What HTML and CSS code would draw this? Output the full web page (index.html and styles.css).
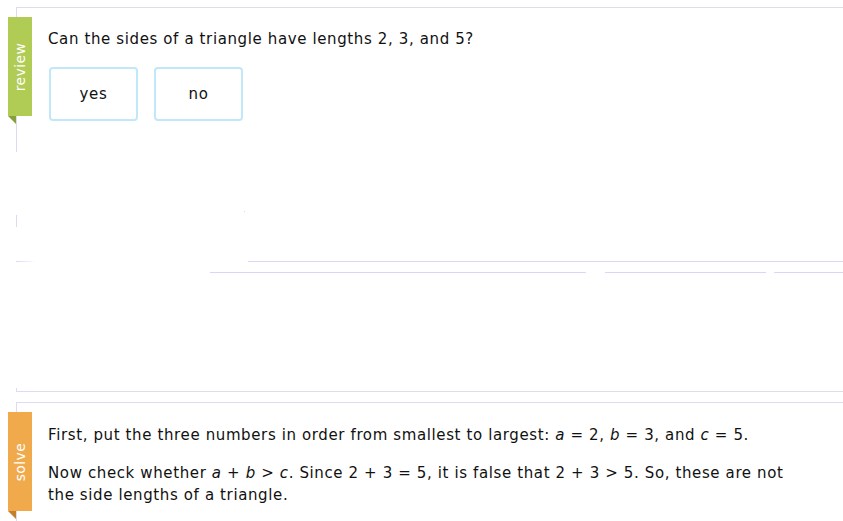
FILE: index.html
```html
<!DOCTYPE html>
<html lang="en">
<head>
<meta charset="utf-8">
<title>Triangle review</title>
<link rel="stylesheet" href="styles.css">
</head>
<body>
<div class="page">
  <section class="panel panel-review">
    <div class="tab">
      <div class="ribbon ribbon-review"><span class="ribbon-label">review</span></div>
      <div class="fold fold-review"></div>
    </div>
    <div class="content">
      <p class="question">Can the sides of a triangle have lengths 2, 3, and 5?</p>
      <div class="choices">
        <button class="choice">yes</button>
        <button class="choice">no</button>
      </div>
    </div>
  </section>

  <div class="ghost">
    <div class="ghost-dot"></div>
    <div class="ghost-tick"></div>
    <div class="ghost-row ghost-row-a">
      <div class="seg seg-fade"></div>
      <div class="seg seg-a2"></div>
    </div>
    <div class="ghost-row ghost-row-b">
      <div class="seg seg-b1"></div>
      <div class="seg seg-b2"></div>
      <div class="seg seg-b3"></div>
    </div>
    <div class="ghost-corner"></div>
  </div>

  <section class="panel panel-solve">
    <div class="tab">
      <div class="ribbon ribbon-solve"><span class="ribbon-label">solve</span></div>
      <div class="fold fold-solve"></div>
    </div>
    <div class="content content-solve">
      <p class="step">First, put the three numbers in order from smallest to largest: <i>a</i> = 2, <i>b</i> = 3, and <i>c</i> = 5.</p>
      <p class="step">Now check whether <i>a</i> + <i>b</i> &gt; <i>c</i>. Since 2 + 3 = 5, it is false that 2 + 3 &gt; 5. So, these are not the side lengths of a triangle.</p>
    </div>
  </section>
</div>
</body>
</html>
```

FILE: styles.css
```css
* { box-sizing: border-box; }
html, body { margin: 0; padding: 0; background: #fff; }
body {
  font-family: "DejaVu Sans", Verdana, sans-serif;
  font-size: 15px;
  color: #111;
  overflow: hidden;
}
.page { width: 843px; height: 521px; padding-top: 7px; overflow: hidden; }

.panel {
  display: flex;
  margin-left: 16px;
  border-top: 1px solid #dedaf2;
  border-left: 1px solid #dedaf2;
}
.panel-review { height: 145px; }
.panel-solve { height: 119px; }

.tab {
  display: flex;
  flex-direction: column;
  margin-left: -9px;
  margin-top: 9px;
  width: 24px;
  flex: none;
}
.ribbon {
  width: 24px;
  height: 99px;
  display: flex;
  align-items: center;
  justify-content: center;
}
.ribbon-review { background: #b0cc54; }
.ribbon-solve { background: #f0a94b; }
.ribbon-label {
  color: #fff;
  font-size: 14px;
  transform: rotate(-90deg);
  white-space: nowrap;
  display: block;
  letter-spacing: 0.4px;
}
.fold {
  width: 0;
  height: 0;
  border-top: 8px solid #86a03a;
  border-left: 8px solid transparent;
}
.fold-solve { border-top-color: #c47f2c; }

.content {
  margin-left: 16px;
  padding-top: 20px;
  letter-spacing: 0.62px;
}
.question {
  margin: 0;
  line-height: 22px;
}
.choices {
  display: flex;
  gap: 16px;
  margin-top: 17px;
  margin-left: 1px;
}
.choice {
  width: 89px;
  height: 54px;
  border: 2px solid #c0e8f8;
  border-radius: 4px;
  background: #fff;
  font-family: inherit;
  font-size: 15px;
  letter-spacing: 0.62px;
  color: #111;
  padding: 0;
}

.content-solve { padding-top: 21px; padding-right: 40px; }
.step { margin: 0 0 16px; line-height: 22px; }
.step i { font-style: italic; }

.ghost { height: 250px; display: flow-root; position: relative; }
.ghost-dot {
  position: absolute;
  left: 244px;
  top: 59px;
  width: 1px;
  height: 1px;
  background: #bfe6f6;
}
.ghost-tick {
  margin-left: 16px;
  margin-top: 63px;
  width: 1px;
  height: 12px;
  background: #dedaf2;
}
.ghost-row { display: flex; height: 1px; }
.ghost-row-a { margin-top: 34px; }
.ghost-row-b { margin-top: 10px; }
.seg { height: 1px; background: #dcd6f6; }
.seg-fade { margin-left: 16px; width: 20px; background: linear-gradient(90deg, #dcd6f6, rgba(220,214,246,0)); }
.seg-a2 { margin-left: 212px; flex: 1; }
.seg-b1 { margin-left: 210px; width: 376px; }
.seg-b2 { margin-left: 19px; width: 161px; }
.seg-b3 { margin-left: 8px; flex: 1; }
.ghost-corner {
  margin-top: 115px;
  margin-left: 16px;
  height: 4px;
  border-left: 1px solid #dedaf2;
  border-bottom: 1px solid #dedaf2;
}
```
